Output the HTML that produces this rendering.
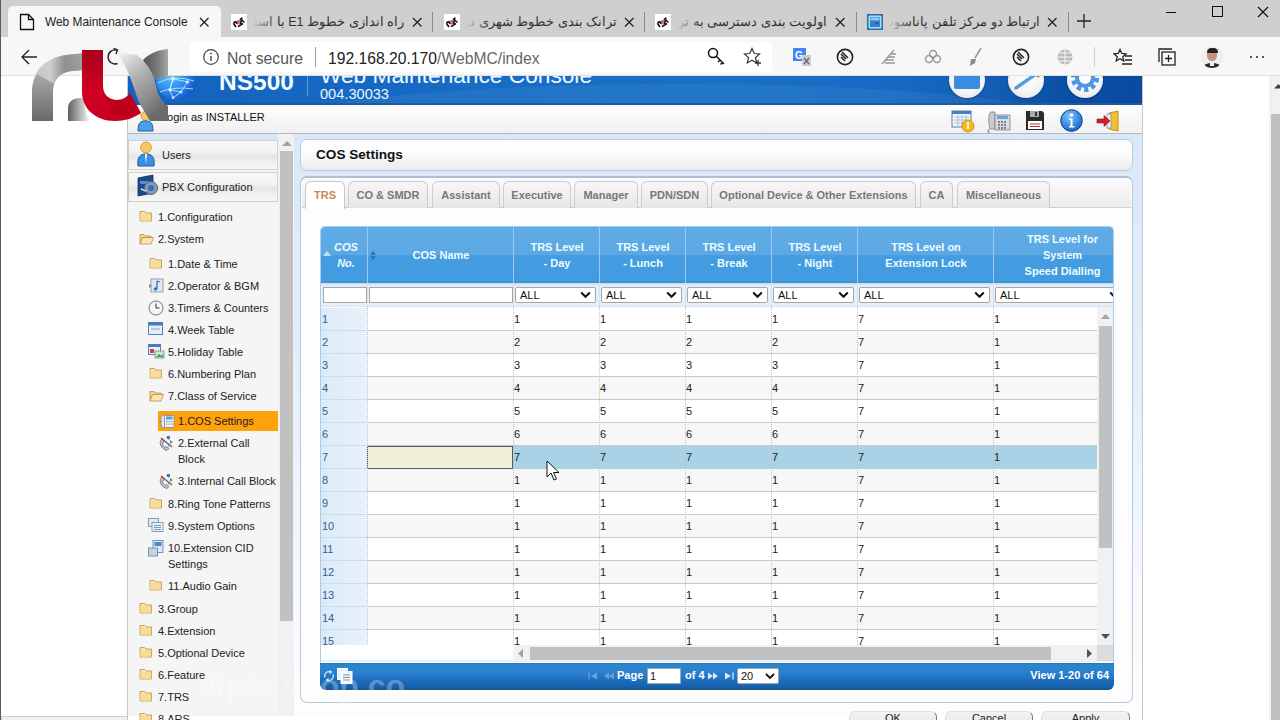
<!DOCTYPE html><html><head><meta charset="utf-8"><style>
*{margin:0;padding:0;box-sizing:border-box}
html,body{width:1280px;height:720px;overflow:hidden;background:#fff;font-family:"Liberation Sans",sans-serif}
.ab{position:absolute}
.t{position:absolute;white-space:nowrap;line-height:1}
#root{position:relative;width:1280px;height:720px;overflow:hidden;background:#fff}
</style></head><body><div id="root">

<div class="ab" style="left:0;top:0;width:1280px;height:38px;background:#cfcfcf"></div>
<div class="ab" style="left:8px;top:6px;width:213px;height:34px;background:#f7f7f7;border-radius:5px 5px 0 0"></div>
<div class="ab" style="left:0;top:37px;width:1280px;height:39px;background:#f7f7f7"></div>
<div class="ab" style="left:0;top:75px;width:1280px;height:1px;background:#e0e0e0"></div>
<div class="ab" style="left:0;top:0;width:1px;height:720px;background:#5a5a5a"></div>
<svg class="ab" style="left:19px;top:13px" width="16" height="18" viewBox="0 0 16 18"><path d="M1.5 1.5h8l5 5v10h-13z M9.5 1.5v5h5" fill="none" stroke="#111" stroke-width="1.3"/></svg>
<div class="t" style="left:45px;top:16.5px;font-size:11.9px;color:#222">Web Maintenance Console</div>
<svg class="ab" style="left:198px;top:16px" width="12" height="12" viewBox="0 0 12 12"><path d="M2 2L10.5 10.5M10.5 2L2 10.5" stroke="#222" stroke-width="1.3"/></svg>
<svg class="ab" style="left:231px;top:14px" width="16" height="16" viewBox="0 0 16 16"><rect width="16" height="16" fill="#fff"/><ellipse cx="7.5" cy="8" rx="2.6" ry="2" fill="#d87070" transform="rotate(-35 7.5 8)"/><path d="M2.5 9.5L5 13M2.5 9.5C3.5 7 6 7.5 5.5 10" fill="none" stroke="#111" stroke-width="1.6"/><path d="M9 4.5L13.5 8.5M11 3.5L9.5 10M7 12.5L12 9.5" fill="none" stroke="#111" stroke-width="1.5"/></svg>
<div class="t" style="left:250px;top:14px;width:154px;height:18px;overflow:hidden;font-size:12.5px;line-height:17px;color:#333;direction:rtl;text-align:right">راه اندازی خطوط E1 با استفاد</div>
<div class="ab" style="left:250px;top:12px;width:26px;height:22px;background:linear-gradient(90deg,#cfcfcf 10%,rgba(207,207,207,0))"></div>
<svg class="ab" style="left:411px;top:16px" width="12" height="12" viewBox="0 0 12 12"><path d="M2 2L10.5 10.5M10.5 2L2 10.5" stroke="#222" stroke-width="1.3"/></svg>
<div class="ab" style="left:432px;top:12px;width:1px;height:20px;background:#8a8a8a"></div>
<svg class="ab" style="left:444px;top:14px" width="16" height="16" viewBox="0 0 16 16"><rect width="16" height="16" fill="#fff"/><ellipse cx="7.5" cy="8" rx="2.6" ry="2" fill="#d87070" transform="rotate(-35 7.5 8)"/><path d="M2.5 9.5L5 13M2.5 9.5C3.5 7 6 7.5 5.5 10" fill="none" stroke="#111" stroke-width="1.6"/><path d="M9 4.5L13.5 8.5M11 3.5L9.5 10M7 12.5L12 9.5" fill="none" stroke="#111" stroke-width="1.5"/></svg>
<div class="t" style="left:463px;top:14px;width:154px;height:18px;overflow:hidden;font-size:12.5px;line-height:17px;color:#333;direction:rtl;text-align:right">ترانک بندی خطوط شهری در د</div>
<div class="ab" style="left:463px;top:12px;width:26px;height:22px;background:linear-gradient(90deg,#cfcfcf 10%,rgba(207,207,207,0))"></div>
<svg class="ab" style="left:623px;top:16px" width="12" height="12" viewBox="0 0 12 12"><path d="M2 2L10.5 10.5M10.5 2L2 10.5" stroke="#222" stroke-width="1.3"/></svg>
<div class="ab" style="left:644px;top:12px;width:1px;height:20px;background:#8a8a8a"></div>
<svg class="ab" style="left:655px;top:14px" width="16" height="16" viewBox="0 0 16 16"><rect width="16" height="16" fill="#fff"/><ellipse cx="7.5" cy="8" rx="2.6" ry="2" fill="#d87070" transform="rotate(-35 7.5 8)"/><path d="M2.5 9.5L5 13M2.5 9.5C3.5 7 6 7.5 5.5 10" fill="none" stroke="#111" stroke-width="1.6"/><path d="M9 4.5L13.5 8.5M11 3.5L9.5 10M7 12.5L12 9.5" fill="none" stroke="#111" stroke-width="1.5"/></svg>
<div class="t" style="left:674px;top:14px;width:153px;height:18px;overflow:hidden;font-size:12.5px;line-height:17px;color:#333;direction:rtl;text-align:right">اولویت بندی دسترسی به ترانک</div>
<div class="ab" style="left:674px;top:12px;width:26px;height:22px;background:linear-gradient(90deg,#cfcfcf 10%,rgba(207,207,207,0))"></div>
<svg class="ab" style="left:834px;top:16px" width="12" height="12" viewBox="0 0 12 12"><path d="M2 2L10.5 10.5M10.5 2L2 10.5" stroke="#222" stroke-width="1.3"/></svg>
<div class="ab" style="left:856px;top:12px;width:1px;height:20px;background:#8a8a8a"></div>
<svg class="ab" style="left:867px;top:14px" width="16" height="16" viewBox="0 0 16 16"><rect x="0" y="0" width="16" height="16" fill="#2f6ea8"/><rect x="1.5" y="1.5" width="13" height="13" rx="1.5" fill="#a8dcff"/><rect x="3" y="3" width="10" height="10" fill="#2a86d4"/><rect x="3.5" y="3.5" width="9" height="3" fill="#8ccaf6"/><circle cx="10" cy="9" r="1.2" fill="#803060"/></svg>
<div class="t" style="left:886px;top:14px;width:154px;height:18px;overflow:hidden;font-size:12.5px;line-height:17px;color:#333;direction:rtl;text-align:right">ارتباط دو مرکز تلفن پاناسونیک</div>
<div class="ab" style="left:886px;top:12px;width:26px;height:22px;background:linear-gradient(90deg,#cfcfcf 10%,rgba(207,207,207,0))"></div>
<svg class="ab" style="left:1046px;top:16px" width="12" height="12" viewBox="0 0 12 12"><path d="M2 2L10.5 10.5M10.5 2L2 10.5" stroke="#222" stroke-width="1.3"/></svg>
<div class="ab" style="left:1068px;top:12px;width:1px;height:20px;background:#8a8a8a"></div>
<svg class="ab" style="left:1076px;top:13px" width="16" height="16" viewBox="0 0 16 16"><path d="M8 1v14M1 8h14" stroke="#222" stroke-width="1.3"/></svg>
<div class="ab" style="left:1166px;top:12px;width:10px;height:1px;background:#111"></div>
<div class="ab" style="left:1212px;top:6px;width:11px;height:11px;border:1px solid #111"></div>
<svg class="ab" style="left:1257px;top:6px" width="12" height="12" viewBox="0 0 12 12"><path d="M1 1L11 11M11 1L1 11" stroke="#111" stroke-width="1.2"/></svg>
<svg class="ab" style="left:20px;top:48px" width="18" height="18" viewBox="0 0 18 18"><path d="M17 9H2M9 2L2 9l7 7" fill="none" stroke="#222" stroke-width="1.4"/></svg>
<svg class="ab" style="left:104px;top:46px" width="18" height="20" viewBox="0 0 18 20"><path d="M13 4.2A7 7 0 1 0 13.5 17.5" fill="none" stroke="#222" stroke-width="1.4"/><path d="M9.5 2.5L13.5 4 12 8" fill="none" stroke="#222" stroke-width="1.4"/></svg>
<div class="ab" style="left:190px;top:42px;width:582px;height:30px;background:#fff;border-radius:3px"></div>
<svg class="ab" style="left:202px;top:48px" width="18" height="18" viewBox="0 0 18 18"><circle cx="9" cy="9" r="7.3" fill="none" stroke="#444" stroke-width="1.2"/><path d="M9 8v5" stroke="#444" stroke-width="1.4"/><circle cx="9" cy="5.5" r="0.9" fill="#444"/></svg>
<div class="t" style="left:227px;top:50.5px;font-size:15.7px;color:#555">Not secure</div>
<div class="ab" style="left:315px;top:47px;width:1px;height:20px;background:#9a9a9a"></div>
<div class="t" style="left:328px;top:50.5px;font-size:15.7px;color:#222">192.168.20.170<span style="color:#666">/WebMC/index</span></div>
<svg class="ab" style="left:707px;top:47px" width="20" height="20" viewBox="0 0 20 20"><circle cx="6" cy="6" r="4.5" fill="none" stroke="#111" stroke-width="1.5"/><path d="M9 9l8 8M13 13l-2 2M15.5 15.5l-2 2" fill="none" stroke="#111" stroke-width="1.5"/></svg>
<svg class="ab" style="left:743px;top:47px" width="20" height="20" viewBox="0 0 20 20"><path d="M9 1.5l2.2 5 5.3.5-4 3.6 1.2 5.3L9 13.2 4.3 15.9l1.2-5.3-4-3.6 5.3-.5z" fill="none" stroke="#333" stroke-width="1.2"/><path d="M15 13v6M12 16h6" stroke="#333" stroke-width="1.3"/></svg>
<svg class="ab" style="left:792px;top:47px" width="20" height="20" viewBox="0 0 20 20"><rect x="1" y="1" width="13" height="13" fill="#4285f4"/><text x="3" y="12" font-size="10" fill="#fff" font-family="Liberation Sans" font-weight="bold">G</text><path d="M10 8h9v11h-9z" fill="#ccc"/><path d="M12 11l5 6M17 11l-5 6" stroke="#666" stroke-width="1.2"/></svg>
<svg class="ab" style="left:836px;top:48px" width="18" height="18" viewBox="0 0 18 18"><circle cx="9" cy="9" r="7.6" fill="none" stroke="#222" stroke-width="1.6"/><path d="M5 6l5 5M6 4l6 6M9 13l-4-4" fill="none" stroke="#222" stroke-width="1.5"/></svg>
<svg class="ab" style="left:880px;top:48px" width="18" height="18" viewBox="0 0 18 18"><path d="M2 16L14 2M5 15h10M6 12h8M8 9h7M10 6h6" fill="none" stroke="#999" stroke-width="1.5"/></svg>
<svg class="ab" style="left:924px;top:49px" width="18" height="16" viewBox="0 0 18 16"><circle cx="5" cy="10" r="3.5" fill="none" stroke="#999" stroke-width="1.4"/><circle cx="13" cy="10" r="3.5" fill="none" stroke="#999" stroke-width="1.4"/><circle cx="9" cy="5" r="3.5" fill="none" stroke="#999" stroke-width="1.4"/></svg>
<svg class="ab" style="left:968px;top:47px" width="16" height="20" viewBox="0 0 16 20"><path d="M13 1L7 11" stroke="#999" stroke-width="1.6"/><path d="M3 12l5 0 -1 4 -5 3z" fill="#888"/></svg>
<svg class="ab" style="left:1012px;top:48px" width="18" height="18" viewBox="0 0 18 18"><circle cx="9" cy="9" r="7.6" fill="none" stroke="#222" stroke-width="1.6"/><path d="M5 6l5 5M6 4l6 6M9 13l-4-4" fill="none" stroke="#222" stroke-width="1.5"/></svg>
<svg class="ab" style="left:1056px;top:48px" width="18" height="18" viewBox="0 0 18 18"><circle cx="9" cy="9" r="7.5" fill="#bbb"/><path d="M1.5 9h15M9 1.5v15M3 5h12M3 13h12" stroke="#f7f7f7" stroke-width="1"/></svg>
<div class="ab" style="left:1094px;top:47px;width:1px;height:20px;background:#d0d0d0"></div>
<svg class="ab" style="left:1113px;top:48px" width="20" height="18" viewBox="0 0 20 18"><path d="M7 1.5l1.8 4 4.2.4-3.2 2.9 1 4.2L7 10.8l-3.8 2.2 1-4.2L1 5.9l4.2-.4z" fill="none" stroke="#222" stroke-width="1.3"/><path d="M12 8h7M12 12h7M9 16h10" stroke="#222" stroke-width="1.3"/></svg>
<svg class="ab" style="left:1157px;top:47px" width="20" height="20" viewBox="0 0 20 20"><rect x="5" y="5" width="13" height="13" fill="none" stroke="#222" stroke-width="1.3"/><path d="M2 15V2h13" fill="none" stroke="#222" stroke-width="1.3"/><path d="M11.5 8v7M8 11.5h7" stroke="#222" stroke-width="1.3"/></svg>
<div class="ab" style="left:1201px;top:46px;width:22px;height:22px;border-radius:50%;overflow:hidden;background:#f0eeec"><div class="ab" style="left:6px;top:3px;width:10px;height:12px;background:#c49580;border-radius:45%"></div><div class="ab" style="left:5.5px;top:1.5px;width:11px;height:5px;background:#222;border-radius:5px 5px 1px 1px"></div><div class="ab" style="left:2px;top:17px;width:18px;height:8px;background:#2a2e3a;border-radius:50% 50% 0 0"></div><div class="ab" style="left:9px;top:16px;width:4px;height:4px;background:#eee"></div></div>
<div class="ab" style="left:1250px;top:56px;width:2px;height:2px;background:#222;border-radius:1px"></div>
<div class="ab" style="left:1256px;top:56px;width:2px;height:2px;background:#222;border-radius:1px"></div>
<div class="ab" style="left:1262px;top:56px;width:2px;height:2px;background:#222;border-radius:1px"></div>
<div class="ab" style="left:0;top:76px;width:1280px;height:644px;overflow:hidden"><div class="ab" style="left:0;top:-76px;width:1280px;height:720px">
<div class="ab" style="left:1269px;top:76px;width:11px;height:644px;background:#f1f1f1"></div>
<div class="ab" style="left:1271px;top:114px;width:9px;height:606px;background:#c1c1c1"></div>
<svg class="ab" style="left:1274px;top:83px" width="9" height="6" viewBox="0 0 9 6"><path d="M0 5.5L4.5 1 9 5.5z" fill="#404040"/></svg>
<div class="ab" style="left:1px;top:716px;width:427px;height:6px;background:#f0f0f0;border:1px solid #cfcfcf;border-radius:0 5px 0 0"></div>
<div class="ab" style="left:127px;top:76px;width:1016px;height:644px;border-left:1px solid #c8c8c8;border-right:1px solid #c8c8c8;background:#fff"></div>
<div class="ab" style="left:128px;top:76px;width:1014px;height:29px;overflow:hidden;background:linear-gradient(90deg,#1462be 0%,#176cc4 35%,#1870c6 60%,#176ac2 75%,#135eb6 85%,#0b4ea4 93%,#0a4aa0 100%)">
<div class="ab" style="left:150px;top:8px;width:800px;height:80px;border-radius:50%;background:rgba(255,255,255,0.05)"></div>
<div class="ab" style="left:0;top:27px;width:1014px;height:2px;background:#1d5c9c"></div>
</div>
<svg class="ab" style="left:156px;top:60px" width="40" height="41" viewBox="0 0 40 41">
<defs><radialGradient id="gl" cx="0.35" cy="0.4" r="0.75"><stop offset="0" stop-color="#58c4f8"/><stop offset="0.35" stop-color="#3a9cf0"/><stop offset="0.7" stop-color="#1f6fe0"/><stop offset="1" stop-color="#0c50c0"/></radialGradient>
<radialGradient id="nd"><stop offset="0" stop-color="#fff"/><stop offset="1" stop-color="#fff" stop-opacity="0"/></radialGradient></defs>
<circle cx="20" cy="20" r="20" fill="url(#gl)"/>
<path d="M2 23Q18 14 38 21M4 32Q20 26 37 29M17 18.75L31.5 22 25 32 17 37.8 13.8 29.9zM17 18.75L13.8 29.9 25 32" fill="none" stroke="#d8f4ff" stroke-width="0.9" opacity="0.85"/>
<circle cx="17" cy="18.75" r="3" fill="url(#nd)"/><circle cx="31.5" cy="22" r="2.6" fill="url(#nd)"/><circle cx="13.8" cy="29.9" r="2.2" fill="url(#nd)"/><circle cx="25" cy="32" r="2.2" fill="url(#nd)"/><circle cx="17" cy="37.8" r="2" fill="url(#nd)"/>
</svg>
<div class="t" style="left:219px;top:69.5px;font-size:24.5px;font-weight:bold;color:#f2fbff">NS500</div>
<div class="ab" style="left:307px;top:76px;width:1px;height:20px;background:rgba(255,255,255,0.35)"></div>
<div class="t" style="left:320px;top:64px;font-size:22.7px;color:#f0f8ff">Web Maintenance Console</div>
<div class="t" style="left:320px;top:87px;font-size:14.6px;color:#eaf6ff">004.30033</div>
<div class="ab" style="left:949px;top:62px;width:36px;height:36px;border-radius:50%;background:radial-gradient(circle at 50% 40%,#ffffff 0%,#f4f4f4 60%,#d8d8d8 100%);box-shadow:0 1px 2px rgba(0,0,0,.3)"></div>
<div class="ab" style="left:1008px;top:62px;width:36px;height:36px;border-radius:50%;background:radial-gradient(circle at 50% 40%,#ffffff 0%,#f4f4f4 60%,#d8d8d8 100%);box-shadow:0 1px 2px rgba(0,0,0,.3)"></div>
<div class="ab" style="left:1067px;top:62px;width:36px;height:36px;border-radius:50%;background:radial-gradient(circle at 50% 40%,#ffffff 0%,#f4f4f4 60%,#d8d8d8 100%);box-shadow:0 1px 2px rgba(0,0,0,.3)"></div>
<div class="ab" style="left:954px;top:73px;width:26px;height:16px;background:#3b8be0;border-radius:2px"></div>
<svg class="ab" style="left:1008px;top:66px" width="36" height="28" viewBox="0 0 36 28"><path d="M8 22L28 8" stroke="#58a0e0" stroke-width="3.5" stroke-linecap="round"/><path d="M24 4l9 5-2.5 3-8-5z" fill="#9a9a9a"/></svg>
<svg class="ab" style="left:1068px;top:66px" width="34" height="30" viewBox="0 0 34 30"><circle cx="17" cy="12" r="11" fill="none" stroke="#4d96e6" stroke-width="6" stroke-dasharray="4 3"/><circle cx="17" cy="12" r="8" fill="none" stroke="#4d96e6" stroke-width="4"/></svg>
<div class="ab" style="left:128px;top:105px;width:1014px;height:29px;background:linear-gradient(#fdfdfd,#f0f0f0);border-bottom:1px solid #b8b8b8"></div>
<div class="t" style="left:161px;top:112px;font-size:11px;color:#111">Login as INSTALLER</div>
<svg class="ab" style="left:137px;top:111px" width="17" height="21" viewBox="0 0 17 21"><circle cx="8.5" cy="5" r="4.5" fill="#f5c870" stroke="#c89030" stroke-width=".8"/><path d="M1 20c0-8 2-10 7.5-10S16 12 16 20z" fill="#4aa0e8" stroke="#1d5fa8" stroke-width="1"/></svg>
<svg class="ab" style="left:951px;top:110px" width="24" height="23" viewBox="0 0 24 23"><rect x="1" y="1" width="19" height="16" fill="#eef4fc" stroke="#5a7fb8"/><rect x="1" y="1" width="19" height="3" fill="#4a7cc0"/><path d="M3 7h15M3 10h15M3 13h15M7 5v11M11 5v11M15 5v11" stroke="#9bb0d0" stroke-width=".7"/><circle cx="17" cy="16" r="6" fill="#f5b820" stroke="#d89000"/><path d="M17 12v7" stroke="#fff" stroke-width="1.6"/></svg>
<svg class="ab" style="left:986px;top:109px" width="26" height="24" viewBox="0 0 26 24"><path d="M5 3c-3 0-3 16 0 17h4V3z" fill="#c8ccd2" stroke="#7a8088" stroke-width=".8"/><rect x="9" y="6" width="15" height="15" fill="#d8dce2" stroke="#7a8088" stroke-width=".8"/><rect x="11" y="7" width="11" height="3" fill="#6aa8d8"/><g fill="#555"><circle cx="13" cy="13" r=".9"/><circle cx="16" cy="13" r=".9"/><circle cx="19" cy="13" r=".9"/><circle cx="13" cy="16" r=".9"/><circle cx="16" cy="16" r=".9"/><circle cx="19" cy="16" r=".9"/><circle cx="13" cy="19" r=".9"/><circle cx="16" cy="19" r=".9"/><circle cx="19" cy="19" r=".9"/></g><path d="M4 20c-3 1-3 4 0 3" fill="none" stroke="#555" stroke-width=".8"/></svg>
<svg class="ab" style="left:1025px;top:110px" width="20" height="21" viewBox="0 0 20 21"><path d="M1 1h16l2 2v17H1z" fill="#2a2a2a"/><rect x="5" y="1" width="9" height="6" fill="#aaa"/><rect x="10" y="2" width="2" height="4" fill="#333"/><rect x="3" y="11" width="14" height="8" fill="#fff"/><path d="M5 14h10M5 16.5h10" stroke="#c03030" stroke-width="1"/></svg>
<svg class="ab" style="left:1060px;top:109px" width="23" height="23" viewBox="0 0 23 23"><defs><radialGradient id="ig" cx=".4" cy=".3" r=".8"><stop offset="0" stop-color="#7cc4ff"/><stop offset="1" stop-color="#0b5cc0"/></radialGradient></defs><circle cx="11.5" cy="11.5" r="10.8" fill="url(#ig)" stroke="#0a3f90" stroke-width="1"/><circle cx="11.5" cy="6" r="1.8" fill="#fff"/><path d="M9 9.5h3.5V17h2v1.5H9V17h1.5V11H9z" fill="#fff"/></svg>
<svg class="ab" style="left:1096px;top:110px" width="24" height="22" viewBox="0 0 24 22"><path d="M13 3l9-2v20l-9-2z" fill="#f0c030" stroke="#b08000" stroke-width=".8"/><rect x="11" y="4" width="4" height="14" fill="#e8eef8" stroke="#8090a8" stroke-width=".8"/><path d="M1 9h7V5.5L14 11l-6 5.5V13H1z" fill="#d42020" stroke="#901010" stroke-width=".6"/></svg>
<div class="ab" style="left:128px;top:134px;width:150px;height:582px;background:#f5f5f5"></div>
<div class="ab" style="left:128px;top:134px;width:150px;height:6px;background:#d8e7f7"></div>
<div class="ab" style="left:278px;top:134px;width:16px;height:582px;background:#f1f1f1"></div>
<div class="ab" style="left:280px;top:151px;width:13px;height:470px;background:#c1c1c1"></div>
<svg class="ab" style="left:282px;top:140px" width="10" height="6" viewBox="0 0 10 6"><path d="M0 6L5 1 10 6z" fill="#a3a3a3"/></svg>
<div class="ab" style="left:128px;top:140px;width:150px;height:30px;border:1px solid #d0d0d0;background:linear-gradient(#f8f8f8 0%,#f2f2f2 40%,#e4e4e4 55%,#f0f0f0 75%,#f6f6f6 100%)"></div>
<div class="t" style="left:162px;top:150px;font-size:11px;color:#222">Users</div>
<div class="ab" style="left:128px;top:172px;width:150px;height:30px;border:1px solid #d0d0d0;background:linear-gradient(#f8f8f8 0%,#f2f2f2 40%,#e4e4e4 55%,#f0f0f0 75%,#f6f6f6 100%)"></div>
<div class="t" style="left:162px;top:182px;font-size:11px;color:#222">PBX Configuration</div>
<svg class="ab" style="left:136px;top:141px" width="20" height="26" viewBox="0 0 20 26"><circle cx="10" cy="6.5" r="5.5" fill="#f7c765" stroke="#c99535" stroke-width=".8"/><path d="M2 25c-1-9 2-12 8-12s9 3 8 12z" fill="#3d8fe0" stroke="#1b5aa5" stroke-width="1"/><path d="M9 13l1 10 1-10z" fill="#fff"/></svg>
<svg class="ab" style="left:137px;top:174px" width="22" height="24" viewBox="0 0 22 24"><path d="M1 4l15-3v18L1 22z" fill="#1e4a8a" stroke="#0e2e60" stroke-width=".8"/><rect x="3" y="7" width="10" height="3" fill="#5a8ad0"/><circle cx="14" cy="14" r="6.5" fill="#8a9ab0" stroke="#556070" stroke-width="1"/><circle cx="14" cy="14" r="3" fill="#3070c0"/><path d="M4 15l5 2" stroke="#dde" stroke-width="1.5"/></svg>
<div class="ab" style="left:158px;top:411px;width:120px;height:20px;background:#ffa10a"></div>
<svg class="ab" style="left:139px;top:210px" width="14" height="12" viewBox="0 0 14 12"><path d="M1 1.5h4.5l1.5 1.5H12.5V11H1z" fill="#fbe5a8" stroke="#b8904a" stroke-width=".8"/><path d="M1.4 4h10.7v6.6H1.4z" fill="#f8dc92"/></svg>
<div class="t" style="left:158px;top:211px;font-size:11px;line-height:16px;margin-top:-2px;color:#222">1.Configuration</div>
<svg class="ab" style="left:139px;top:233px" width="15" height="12" viewBox="0 0 15 12"><path d="M1 1.5h4l1.5 1.5H12v2H3.5L1 11z" fill="#f3d68c" stroke="#b8904a" stroke-width=".8"/><path d="M1 11l2.5-6.5H14.5L12 11z" fill="#fae6ac" stroke="#b8904a" stroke-width=".8"/></svg>
<div class="t" style="left:158px;top:233px;font-size:11px;line-height:16px;margin-top:-2px;color:#222">2.System</div>
<svg class="ab" style="left:149px;top:257px" width="14" height="12" viewBox="0 0 14 12"><path d="M1 1.5h4.5l1.5 1.5H12.5V11H1z" fill="#fbe5a8" stroke="#b8904a" stroke-width=".8"/><path d="M1.4 4h10.7v6.6H1.4z" fill="#f8dc92"/></svg>
<div class="t" style="left:168px;top:258px;font-size:11px;line-height:16px;margin-top:-2px;color:#222">1.Date &amp; Time</div>
<svg class="ab" style="left:148px;top:278px" width="16" height="16" viewBox="0 0 16 16"><rect x="3" y="1" width="12" height="13" fill="#dfe8f2" stroke="#7890a8" stroke-width=".8"/><path d="M9 3v8M9 3l3 1" stroke="#3a70b8" stroke-width="1.3" fill="none"/><circle cx="7.5" cy="11" r="1.8" fill="#3a70b8"/><path d="M1 6l3 2-3 2z" fill="#889"/></svg>
<div class="t" style="left:168px;top:280px;font-size:11px;line-height:16px;margin-top:-2px;color:#222">2.Operator &amp; BGM</div>
<svg class="ab" style="left:148px;top:300px" width="16" height="16" viewBox="0 0 16 16"><circle cx="8" cy="8" r="7" fill="#f4f4f4" stroke="#777" stroke-width="1"/><path d="M8 3.5V8h3.5" stroke="#333" stroke-width="1" fill="none"/></svg>
<div class="t" style="left:168px;top:302px;font-size:11px;line-height:16px;margin-top:-2px;color:#222">3.Timers &amp; Counters</div>
<svg class="ab" style="left:148px;top:322px" width="15" height="13" viewBox="0 0 15 13"><rect x=".5" y=".5" width="14" height="12" fill="#e6eefa" stroke="#5a80b8"/><rect x=".5" y=".5" width="14" height="3" fill="#4a78c0"/><path d="M3 7h9" stroke="#8aa" stroke-width="1"/></svg>
<div class="t" style="left:168px;top:324px;font-size:11px;line-height:16px;margin-top:-2px;color:#222">4.Week Table</div>
<svg class="ab" style="left:148px;top:344px" width="17" height="15" viewBox="0 0 17 15"><rect x=".5" y=".5" width="12" height="10" fill="#e8eef8" stroke="#5a80b8"/><rect x=".5" y=".5" width="12" height="2.5" fill="#4a78c0"/><rect x="2" y="5" width="4" height="4" fill="#d04040"/><rect x="7" y="7" width="9" height="7" fill="#cfe4cf" stroke="#6a8a9a" stroke-width=".8"/><path d="M8 13l3-3 2 2 2-2v3z" fill="#4a9a4a"/></svg>
<div class="t" style="left:168px;top:346px;font-size:11px;line-height:16px;margin-top:-2px;color:#222">5.Holiday Table</div>
<svg class="ab" style="left:149px;top:367px" width="14" height="12" viewBox="0 0 14 12"><path d="M1 1.5h4.5l1.5 1.5H12.5V11H1z" fill="#fbe5a8" stroke="#b8904a" stroke-width=".8"/><path d="M1.4 4h10.7v6.6H1.4z" fill="#f8dc92"/></svg>
<div class="t" style="left:168px;top:368px;font-size:11px;line-height:16px;margin-top:-2px;color:#222">6.Numbering Plan</div>
<svg class="ab" style="left:149px;top:390px" width="15" height="12" viewBox="0 0 15 12"><path d="M1 1.5h4l1.5 1.5H12v2H3.5L1 11z" fill="#f3d68c" stroke="#b8904a" stroke-width=".8"/><path d="M1 11l2.5-6.5H14.5L12 11z" fill="#fae6ac" stroke="#b8904a" stroke-width=".8"/></svg>
<div class="t" style="left:168px;top:390px;font-size:11px;line-height:16px;margin-top:-2px;color:#222">7.Class of Service</div>
<svg class="ab" style="left:158px;top:413px" width="17" height="17" viewBox="0 0 17 17"><path d="M5 2C2 3 2 13 5 15h2V2z" fill="#dfe6ee" stroke="#7a8a98" stroke-width=".8"/><rect x="6.5" y="2.5" width="9.5" height="12" rx="1" fill="#eef3f8" stroke="#7a8a98" stroke-width=".8"/><rect x="8" y="3.5" width="6.5" height="3" fill="#5a9ad8"/><g fill="#8a98a8"><rect x="8" y="8" width="1.5" height="1.2"/><rect x="10.5" y="8" width="1.5" height="1.2"/><rect x="13" y="8" width="1.5" height="1.2"/><rect x="8" y="10.5" width="1.5" height="1.2"/><rect x="10.5" y="10.5" width="1.5" height="1.2"/><rect x="13" y="10.5" width="1.5" height="1.2"/></g><path d="M1 8.5h3" stroke="#889" stroke-width="1"/></svg>
<div class="t" style="left:178px;top:415px;font-size:11px;line-height:16px;margin-top:-2px;color:#222">1.COS Settings</div>
<svg class="ab" style="left:158px;top:435px" width="17" height="17" viewBox="0 0 17 17"><path d="M4 4C0 7 3 14 9 15.5L11 13.5 8.5 11.5 7 12.5C5 11 4.5 9.5 4.5 8L6 7 5 4z" fill="#b8c4cc" stroke="#6a7a88" stroke-width=".9"/><path d="M3 3L14 12" stroke="#b04030" stroke-width="1.3"/><path d="M8 2l3 0 0 3z" fill="#2f78c8"/><rect x="9" y="1" width="3" height="3" fill="#3a7ad0"/><path d="M12 5l3 2-3 2z" fill="#5aa040"/><path d="M9 8l3 1-1 3z" fill="#3a88d8"/></svg>
<div class="t" style="left:178px;top:437px;font-size:11px;line-height:16px;margin-top:-2px;color:#222">2.External Call<br>Block</div>
<svg class="ab" style="left:158px;top:473px" width="17" height="17" viewBox="0 0 17 17"><path d="M4 4C0 7 3 14 9 15.5L11 13.5 8.5 11.5 7 12.5C5 11 4.5 9.5 4.5 8L6 7 5 4z" fill="#b8c4cc" stroke="#6a7a88" stroke-width=".9"/><path d="M3 3L14 12" stroke="#b04030" stroke-width="1.3"/><path d="M8 2l3 0 0 3z" fill="#2f78c8"/><rect x="9" y="1" width="3" height="3" fill="#3a7ad0"/><path d="M12 5l3 2-3 2z" fill="#5aa040"/><path d="M9 8l3 1-1 3z" fill="#3a88d8"/></svg>
<div class="t" style="left:178px;top:475px;font-size:11px;line-height:16px;margin-top:-2px;color:#222">3.Internal Call Block</div>
<svg class="ab" style="left:149px;top:497px" width="14" height="12" viewBox="0 0 14 12"><path d="M1 1.5h4.5l1.5 1.5H12.5V11H1z" fill="#fbe5a8" stroke="#b8904a" stroke-width=".8"/><path d="M1.4 4h10.7v6.6H1.4z" fill="#f8dc92"/></svg>
<div class="t" style="left:168px;top:498px;font-size:11px;line-height:16px;margin-top:-2px;color:#222">8.Ring Tone Patterns</div>
<svg class="ab" style="left:148px;top:518px" width="16" height="14" viewBox="0 0 16 14"><rect x=".5" y=".5" width="10" height="8" fill="#dfe9f5" stroke="#6a88a8" stroke-width=".8"/><rect x="4" y="4.5" width="11" height="9" fill="#eef3f9" stroke="#6a88a8" stroke-width=".8"/><path d="M6 7.5h7M6 9.5h7M6 11.5h7" stroke="#5080b0" stroke-width=".8"/></svg>
<div class="t" style="left:168px;top:520px;font-size:11px;line-height:16px;margin-top:-2px;color:#222">9.System Options</div>
<svg class="ab" style="left:148px;top:540px" width="16" height="17" viewBox="0 0 16 17"><rect x="5" y=".5" width="10" height="12" fill="#dde8f5" stroke="#5a7ea8" stroke-width=".8"/><rect x="6.5" y="2" width="7" height="4" fill="#4a88d0"/><rect x=".5" y="8" width="9" height="8" fill="#c8d4e2" stroke="#5a7ea8" stroke-width=".8"/></svg>
<div class="t" style="left:168px;top:542px;font-size:11px;line-height:16px;margin-top:-2px;color:#222">10.Extension CID<br>Settings</div>
<svg class="ab" style="left:149px;top:579px" width="14" height="12" viewBox="0 0 14 12"><path d="M1 1.5h4.5l1.5 1.5H12.5V11H1z" fill="#fbe5a8" stroke="#b8904a" stroke-width=".8"/><path d="M1.4 4h10.7v6.6H1.4z" fill="#f8dc92"/></svg>
<div class="t" style="left:168px;top:580px;font-size:11px;line-height:16px;margin-top:-2px;color:#222">11.Audio Gain</div>
<svg class="ab" style="left:139px;top:602px" width="14" height="12" viewBox="0 0 14 12"><path d="M1 1.5h4.5l1.5 1.5H12.5V11H1z" fill="#fbe5a8" stroke="#b8904a" stroke-width=".8"/><path d="M1.4 4h10.7v6.6H1.4z" fill="#f8dc92"/></svg>
<div class="t" style="left:158px;top:603px;font-size:11px;line-height:16px;margin-top:-2px;color:#222">3.Group</div>
<svg class="ab" style="left:139px;top:624px" width="14" height="12" viewBox="0 0 14 12"><path d="M1 1.5h4.5l1.5 1.5H12.5V11H1z" fill="#fbe5a8" stroke="#b8904a" stroke-width=".8"/><path d="M1.4 4h10.7v6.6H1.4z" fill="#f8dc92"/></svg>
<div class="t" style="left:158px;top:625px;font-size:11px;line-height:16px;margin-top:-2px;color:#222">4.Extension</div>
<svg class="ab" style="left:139px;top:646px" width="14" height="12" viewBox="0 0 14 12"><path d="M1 1.5h4.5l1.5 1.5H12.5V11H1z" fill="#fbe5a8" stroke="#b8904a" stroke-width=".8"/><path d="M1.4 4h10.7v6.6H1.4z" fill="#f8dc92"/></svg>
<div class="t" style="left:158px;top:647px;font-size:11px;line-height:16px;margin-top:-2px;color:#222">5.Optional Device</div>
<svg class="ab" style="left:139px;top:668px" width="14" height="12" viewBox="0 0 14 12"><path d="M1 1.5h4.5l1.5 1.5H12.5V11H1z" fill="#fbe5a8" stroke="#b8904a" stroke-width=".8"/><path d="M1.4 4h10.7v6.6H1.4z" fill="#f8dc92"/></svg>
<div class="t" style="left:158px;top:669px;font-size:11px;line-height:16px;margin-top:-2px;color:#222">6.Feature</div>
<svg class="ab" style="left:139px;top:690px" width="14" height="12" viewBox="0 0 14 12"><path d="M1 1.5h4.5l1.5 1.5H12.5V11H1z" fill="#fbe5a8" stroke="#b8904a" stroke-width=".8"/><path d="M1.4 4h10.7v6.6H1.4z" fill="#f8dc92"/></svg>
<div class="t" style="left:158px;top:691px;font-size:11px;line-height:16px;margin-top:-2px;color:#222">7.TRS</div>
<svg class="ab" style="left:139px;top:712px" width="14" height="12" viewBox="0 0 14 12"><path d="M1 1.5h4.5l1.5 1.5H12.5V11H1z" fill="#fbe5a8" stroke="#b8904a" stroke-width=".8"/><path d="M1.4 4h10.7v6.6H1.4z" fill="#f8dc92"/></svg>
<div class="t" style="left:158px;top:713px;font-size:11px;line-height:16px;margin-top:-2px;color:#222">8.ARS</div>
<div class="ab" style="left:294px;top:134px;width:848px;height:582px;background:linear-gradient(#d8e8fa 0px,#e4effb 250px,#f6f9fe 450px,#fdfdfe 582px)"></div>
<div class="ab" style="left:300px;top:139px;width:833px;height:32px;border:1px solid #bccbdb;border-radius:7px;background:linear-gradient(#ffffff 0%,#fbfbfb 50%,#ebebeb 100%)"></div>
<div class="t" style="left:316px;top:148px;font-size:13.6px;font-weight:bold;color:#111">COS Settings</div>
<div class="ab" style="left:300px;top:176px;width:833px;height:527px;border:1px solid #b8c8d8;border-top:2px solid #b0c0d0;border-radius:7px;background:#fdfdfd"></div>
<div class="ab" style="left:302px;top:178px;width:829px;height:30px;border-radius:6px 6px 0 0;background:linear-gradient(#fbfbfb,#ececec)"></div>
<div class="ab" style="left:302px;top:207px;width:829px;height:1px;background:#d0d0d0"></div>
<div class="ab" style="left:305px;top:181px;width:40px;height:28px;border:1px solid #c8c8c8;border-bottom:none;border-radius:6px 6px 0 0;background:#fff"></div>
<div class="t" style="left:305px;top:190px;width:40px;text-align:center;font-size:11px;font-weight:bold;color:#c98a55">TRS</div>
<div class="ab" style="left:348px;top:181px;width:80px;height:27px;border:1px solid #cdcdcd;border-bottom:none;border-radius:6px 6px 0 0;background:linear-gradient(#f7f7f7,#e6e6e6)"></div>
<div class="t" style="left:348px;top:190px;width:80px;text-align:center;font-size:11px;font-weight:bold;color:#787878">CO &amp; SMDR</div>
<div class="ab" style="left:432px;top:181px;width:68px;height:27px;border:1px solid #cdcdcd;border-bottom:none;border-radius:6px 6px 0 0;background:linear-gradient(#f7f7f7,#e6e6e6)"></div>
<div class="t" style="left:432px;top:190px;width:68px;text-align:center;font-size:11px;font-weight:bold;color:#787878">Assistant</div>
<div class="ab" style="left:503px;top:181px;width:68px;height:27px;border:1px solid #cdcdcd;border-bottom:none;border-radius:6px 6px 0 0;background:linear-gradient(#f7f7f7,#e6e6e6)"></div>
<div class="t" style="left:503px;top:190px;width:68px;text-align:center;font-size:11px;font-weight:bold;color:#787878">Executive</div>
<div class="ab" style="left:574px;top:181px;width:64px;height:27px;border:1px solid #cdcdcd;border-bottom:none;border-radius:6px 6px 0 0;background:linear-gradient(#f7f7f7,#e6e6e6)"></div>
<div class="t" style="left:574px;top:190px;width:64px;text-align:center;font-size:11px;font-weight:bold;color:#787878">Manager</div>
<div class="ab" style="left:641px;top:181px;width:67px;height:27px;border:1px solid #cdcdcd;border-bottom:none;border-radius:6px 6px 0 0;background:linear-gradient(#f7f7f7,#e6e6e6)"></div>
<div class="t" style="left:641px;top:190px;width:67px;text-align:center;font-size:11px;font-weight:bold;color:#787878">PDN/SDN</div>
<div class="ab" style="left:711px;top:181px;width:205px;height:27px;border:1px solid #cdcdcd;border-bottom:none;border-radius:6px 6px 0 0;background:linear-gradient(#f7f7f7,#e6e6e6)"></div>
<div class="t" style="left:711px;top:190px;width:205px;text-align:center;font-size:11px;font-weight:bold;color:#787878">Optional Device &amp; Other Extensions</div>
<div class="ab" style="left:920px;top:181px;width:33px;height:27px;border:1px solid #cdcdcd;border-bottom:none;border-radius:6px 6px 0 0;background:linear-gradient(#f7f7f7,#e6e6e6)"></div>
<div class="t" style="left:920px;top:190px;width:33px;text-align:center;font-size:11px;font-weight:bold;color:#787878">CA</div>
<div class="ab" style="left:957px;top:181px;width:93px;height:27px;border:1px solid #cdcdcd;border-bottom:none;border-radius:6px 6px 0 0;background:linear-gradient(#f7f7f7,#e6e6e6)"></div>
<div class="t" style="left:957px;top:190px;width:93px;text-align:center;font-size:11px;font-weight:bold;color:#787878">Miscellaneous</div>
<div class="ab" style="left:320px;top:226px;width:794px;height:437px;background:#fff;border:1px solid #a9cdee;border-bottom:none;border-radius:5px 5px 0 0;overflow:hidden"></div>
<div class="ab" style="left:321px;top:227px;width:792px;height:56px;border-radius:4px 4px 0 0;background:linear-gradient(#60ace6 0%,#5ba8e4 50%,#449de0 51%,#419bdf 96%,#3a90d4 100%)"></div>
<div class="ab" style="left:367px;top:227px;width:1px;height:56px;background:#9ccaf0"></div>
<div class="ab" style="left:513px;top:227px;width:1px;height:56px;background:#9ccaf0"></div>
<div class="ab" style="left:599px;top:227px;width:1px;height:56px;background:#9ccaf0"></div>
<div class="ab" style="left:685px;top:227px;width:1px;height:56px;background:#9ccaf0"></div>
<div class="ab" style="left:771px;top:227px;width:1px;height:56px;background:#9ccaf0"></div>
<div class="ab" style="left:857px;top:227px;width:1px;height:56px;background:#9ccaf0"></div>
<div class="ab" style="left:993px;top:227px;width:1px;height:56px;background:#9ccaf0"></div>
<div class="t" style="left:323px;top:239.0px;width:46px;text-align:center;font-size:11px;font-weight:bold;line-height:16px;color:#eefcff"><i>COS<br>No.</i></div>
<div class="t" style="left:368px;top:247.0px;width:146px;text-align:center;font-size:11px;font-weight:bold;line-height:16px;color:#eefcff">COS Name</div>
<div class="t" style="left:514px;top:239.0px;width:86px;text-align:center;font-size:11px;font-weight:bold;line-height:16px;color:#eefcff">TRS Level<br>- Day</div>
<div class="t" style="left:600px;top:239.0px;width:86px;text-align:center;font-size:11px;font-weight:bold;line-height:16px;color:#eefcff">TRS Level<br>- Lunch</div>
<div class="t" style="left:686px;top:239.0px;width:86px;text-align:center;font-size:11px;font-weight:bold;line-height:16px;color:#eefcff">TRS Level<br>- Break</div>
<div class="t" style="left:772px;top:239.0px;width:86px;text-align:center;font-size:11px;font-weight:bold;line-height:16px;color:#eefcff">TRS Level<br>- Night</div>
<div class="t" style="left:858px;top:239.0px;width:136px;text-align:center;font-size:11px;font-weight:bold;line-height:16px;color:#eefcff">TRS Level on<br>Extension Lock</div>
<div class="t" style="left:994px;top:231.0px;width:137px;text-align:center;font-size:11px;font-weight:bold;line-height:16px;color:#eefcff">TRS Level for<br>System<br>Speed Dialling</div>
<svg class="ab" style="left:323px;top:251px" width="8" height="5" viewBox="0 0 8 5"><path d="M0 5L4 0 8 5z" fill="#bfe0f8"/></svg>
<svg class="ab" style="left:369.5px;top:251px" width="6" height="9" viewBox="0 0 6 9"><path d="M0 3.8L3 0 6 3.8zM0 5.2L3 9 6 5.2z" fill="#2a6fb8"/></svg>
<div class="ab" style="left:321px;top:283px;width:792px;height:24px;background:linear-gradient(#bcdcf6 0px,#dceaf8 2px,#e7eff8 4px)"></div>
<div class="ab" style="left:321px;top:306px;width:792px;height:1px;background:#d6e2ee"></div>
<div class="ab" style="left:0;top:0;width:1113px;height:720px;overflow:hidden">
<div class="ab" style="left:323px;top:287px;width:44px;height:16px;background:#fff;border:1px solid #a6a6a6"></div>
<div class="ab" style="left:369px;top:287px;width:144px;height:16px;background:#fff;border:1px solid #a6a6a6"></div>
<div class="ab" style="left:515px;top:287px;width:81px;height:16px;background:#fff;border:1px solid #a6a6a6;border-radius:2px"></div>
<div class="t" style="left:520px;top:290px;font-size:11px;color:#111">ALL</div>
<svg class="ab" style="left:580px;top:291px" width="11" height="8" viewBox="0 0 11 8"><path d="M1.2 1.5l4.3 4.3 4.3-4.3" fill="none" stroke="#111" stroke-width="2"/></svg>
<div class="ab" style="left:601px;top:287px;width:81px;height:16px;background:#fff;border:1px solid #a6a6a6;border-radius:2px"></div>
<div class="t" style="left:606px;top:290px;font-size:11px;color:#111">ALL</div>
<svg class="ab" style="left:666px;top:291px" width="11" height="8" viewBox="0 0 11 8"><path d="M1.2 1.5l4.3 4.3 4.3-4.3" fill="none" stroke="#111" stroke-width="2"/></svg>
<div class="ab" style="left:687px;top:287px;width:81px;height:16px;background:#fff;border:1px solid #a6a6a6;border-radius:2px"></div>
<div class="t" style="left:692px;top:290px;font-size:11px;color:#111">ALL</div>
<svg class="ab" style="left:752px;top:291px" width="11" height="8" viewBox="0 0 11 8"><path d="M1.2 1.5l4.3 4.3 4.3-4.3" fill="none" stroke="#111" stroke-width="2"/></svg>
<div class="ab" style="left:773px;top:287px;width:81px;height:16px;background:#fff;border:1px solid #a6a6a6;border-radius:2px"></div>
<div class="t" style="left:778px;top:290px;font-size:11px;color:#111">ALL</div>
<svg class="ab" style="left:838px;top:291px" width="11" height="8" viewBox="0 0 11 8"><path d="M1.2 1.5l4.3 4.3 4.3-4.3" fill="none" stroke="#111" stroke-width="2"/></svg>
<div class="ab" style="left:859px;top:287px;width:131px;height:16px;background:#fff;border:1px solid #a6a6a6;border-radius:2px"></div>
<div class="t" style="left:864px;top:290px;font-size:11px;color:#111">ALL</div>
<svg class="ab" style="left:974px;top:291px" width="11" height="8" viewBox="0 0 11 8"><path d="M1.2 1.5l4.3 4.3 4.3-4.3" fill="none" stroke="#111" stroke-width="2"/></svg>
<div class="ab" style="left:995px;top:287px;width:130px;height:16px;background:#fff;border:1px solid #a6a6a6;border-radius:2px"></div>
<div class="t" style="left:1000px;top:290px;font-size:11px;color:#111">ALL</div>
<svg class="ab" style="left:1109px;top:291px" width="11" height="8" viewBox="0 0 11 8"><path d="M1.2 1.5l4.3 4.3 4.3-4.3" fill="none" stroke="#111" stroke-width="2"/></svg>
</div>
<div class="ab" style="left:367px;top:283px;width:1px;height:24px;background:#d6e2ee"></div>
<div class="ab" style="left:513px;top:283px;width:1px;height:24px;background:#d6e2ee"></div>
<div class="ab" style="left:599px;top:283px;width:1px;height:24px;background:#d6e2ee"></div>
<div class="ab" style="left:685px;top:283px;width:1px;height:24px;background:#d6e2ee"></div>
<div class="ab" style="left:771px;top:283px;width:1px;height:24px;background:#d6e2ee"></div>
<div class="ab" style="left:857px;top:283px;width:1px;height:24px;background:#d6e2ee"></div>
<div class="ab" style="left:993px;top:283px;width:1px;height:24px;background:#d6e2ee"></div>
<div class="ab" style="left:321px;top:307px;width:792px;height:338px;overflow:hidden">
<div class="ab" style="left:46px;top:0.5px;width:730px;height:23px;background:#ffffff;border-bottom:1px solid #c9c9c9"></div>
<div class="ab" style="left:0;top:0.5px;width:46px;height:23px;background:linear-gradient(90deg,#dceaf8,#e9f2fb);border-bottom:1px solid #cfdbe8"></div>
<div class="t" style="left:1px;top:6.5px;font-size:11px;color:#3a5f88">1</div>
<div class="t" style="left:193px;top:6.5px;font-size:11px;color:#222">1</div>
<div class="t" style="left:279px;top:6.5px;font-size:11px;color:#222">1</div>
<div class="t" style="left:365px;top:6.5px;font-size:11px;color:#222">1</div>
<div class="t" style="left:451px;top:6.5px;font-size:11px;color:#222">1</div>
<div class="t" style="left:537px;top:6.5px;font-size:11px;color:#222">7</div>
<div class="t" style="left:673px;top:6.5px;font-size:11px;color:#222">1</div>
<div class="ab" style="left:46px;top:23.5px;width:730px;height:23px;background:#f7f7f7;border-bottom:1px solid #c9c9c9"></div>
<div class="ab" style="left:0;top:23.5px;width:46px;height:23px;background:linear-gradient(90deg,#dceaf8,#e9f2fb);border-bottom:1px solid #cfdbe8"></div>
<div class="t" style="left:1px;top:29.5px;font-size:11px;color:#3a5f88">2</div>
<div class="t" style="left:193px;top:29.5px;font-size:11px;color:#222">2</div>
<div class="t" style="left:279px;top:29.5px;font-size:11px;color:#222">2</div>
<div class="t" style="left:365px;top:29.5px;font-size:11px;color:#222">2</div>
<div class="t" style="left:451px;top:29.5px;font-size:11px;color:#222">2</div>
<div class="t" style="left:537px;top:29.5px;font-size:11px;color:#222">7</div>
<div class="t" style="left:673px;top:29.5px;font-size:11px;color:#222">1</div>
<div class="ab" style="left:46px;top:46.5px;width:730px;height:23px;background:#ffffff;border-bottom:1px solid #c9c9c9"></div>
<div class="ab" style="left:0;top:46.5px;width:46px;height:23px;background:linear-gradient(90deg,#dceaf8,#e9f2fb);border-bottom:1px solid #cfdbe8"></div>
<div class="t" style="left:1px;top:52.5px;font-size:11px;color:#3a5f88">3</div>
<div class="t" style="left:193px;top:52.5px;font-size:11px;color:#222">3</div>
<div class="t" style="left:279px;top:52.5px;font-size:11px;color:#222">3</div>
<div class="t" style="left:365px;top:52.5px;font-size:11px;color:#222">3</div>
<div class="t" style="left:451px;top:52.5px;font-size:11px;color:#222">3</div>
<div class="t" style="left:537px;top:52.5px;font-size:11px;color:#222">7</div>
<div class="t" style="left:673px;top:52.5px;font-size:11px;color:#222">1</div>
<div class="ab" style="left:46px;top:69.5px;width:730px;height:23px;background:#f7f7f7;border-bottom:1px solid #c9c9c9"></div>
<div class="ab" style="left:0;top:69.5px;width:46px;height:23px;background:linear-gradient(90deg,#dceaf8,#e9f2fb);border-bottom:1px solid #cfdbe8"></div>
<div class="t" style="left:1px;top:75.5px;font-size:11px;color:#3a5f88">4</div>
<div class="t" style="left:193px;top:75.5px;font-size:11px;color:#222">4</div>
<div class="t" style="left:279px;top:75.5px;font-size:11px;color:#222">4</div>
<div class="t" style="left:365px;top:75.5px;font-size:11px;color:#222">4</div>
<div class="t" style="left:451px;top:75.5px;font-size:11px;color:#222">4</div>
<div class="t" style="left:537px;top:75.5px;font-size:11px;color:#222">7</div>
<div class="t" style="left:673px;top:75.5px;font-size:11px;color:#222">1</div>
<div class="ab" style="left:46px;top:92.5px;width:730px;height:23px;background:#ffffff;border-bottom:1px solid #c9c9c9"></div>
<div class="ab" style="left:0;top:92.5px;width:46px;height:23px;background:linear-gradient(90deg,#dceaf8,#e9f2fb);border-bottom:1px solid #cfdbe8"></div>
<div class="t" style="left:1px;top:98.5px;font-size:11px;color:#3a5f88">5</div>
<div class="t" style="left:193px;top:98.5px;font-size:11px;color:#222">5</div>
<div class="t" style="left:279px;top:98.5px;font-size:11px;color:#222">5</div>
<div class="t" style="left:365px;top:98.5px;font-size:11px;color:#222">5</div>
<div class="t" style="left:451px;top:98.5px;font-size:11px;color:#222">5</div>
<div class="t" style="left:537px;top:98.5px;font-size:11px;color:#222">7</div>
<div class="t" style="left:673px;top:98.5px;font-size:11px;color:#222">1</div>
<div class="ab" style="left:46px;top:115.5px;width:730px;height:23px;background:#f7f7f7;border-bottom:1px solid #c9c9c9"></div>
<div class="ab" style="left:0;top:115.5px;width:46px;height:23px;background:linear-gradient(90deg,#dceaf8,#e9f2fb);border-bottom:1px solid #cfdbe8"></div>
<div class="t" style="left:1px;top:121.5px;font-size:11px;color:#3a5f88">6</div>
<div class="t" style="left:193px;top:121.5px;font-size:11px;color:#222">6</div>
<div class="t" style="left:279px;top:121.5px;font-size:11px;color:#222">6</div>
<div class="t" style="left:365px;top:121.5px;font-size:11px;color:#222">6</div>
<div class="t" style="left:451px;top:121.5px;font-size:11px;color:#222">6</div>
<div class="t" style="left:537px;top:121.5px;font-size:11px;color:#222">7</div>
<div class="t" style="left:673px;top:121.5px;font-size:11px;color:#222">1</div>
<div class="ab" style="left:46px;top:138.5px;width:730px;height:23px;background:#ffffff;border-bottom:1px solid #c9c9c9"></div>
<div class="ab" style="left:0;top:138.5px;width:46px;height:23px;background:linear-gradient(90deg,#dceaf8,#e9f2fb);border-bottom:1px solid #cfdbe8"></div>
<div class="ab" style="left:192px;top:138.5px;width:584px;height:23px;background:#a9d2e6"></div>
<div class="ab" style="left:46px;top:138.5px;width:146px;height:23px;background:#f3f0da;border:1px solid #5a5a5a"></div>
<div class="t" style="left:1px;top:144.5px;font-size:11px;color:#3a5f88">7</div>
<div class="t" style="left:193px;top:144.5px;font-size:11px;color:#222">7</div>
<div class="t" style="left:279px;top:144.5px;font-size:11px;color:#222">7</div>
<div class="t" style="left:365px;top:144.5px;font-size:11px;color:#222">7</div>
<div class="t" style="left:451px;top:144.5px;font-size:11px;color:#222">7</div>
<div class="t" style="left:537px;top:144.5px;font-size:11px;color:#222">7</div>
<div class="t" style="left:673px;top:144.5px;font-size:11px;color:#222">1</div>
<div class="ab" style="left:46px;top:161.5px;width:730px;height:23px;background:#f7f7f7;border-bottom:1px solid #c9c9c9"></div>
<div class="ab" style="left:0;top:161.5px;width:46px;height:23px;background:linear-gradient(90deg,#dceaf8,#e9f2fb);border-bottom:1px solid #cfdbe8"></div>
<div class="t" style="left:1px;top:167.5px;font-size:11px;color:#3a5f88">8</div>
<div class="t" style="left:193px;top:167.5px;font-size:11px;color:#222">1</div>
<div class="t" style="left:279px;top:167.5px;font-size:11px;color:#222">1</div>
<div class="t" style="left:365px;top:167.5px;font-size:11px;color:#222">1</div>
<div class="t" style="left:451px;top:167.5px;font-size:11px;color:#222">1</div>
<div class="t" style="left:537px;top:167.5px;font-size:11px;color:#222">7</div>
<div class="t" style="left:673px;top:167.5px;font-size:11px;color:#222">1</div>
<div class="ab" style="left:46px;top:184.5px;width:730px;height:23px;background:#ffffff;border-bottom:1px solid #c9c9c9"></div>
<div class="ab" style="left:0;top:184.5px;width:46px;height:23px;background:linear-gradient(90deg,#dceaf8,#e9f2fb);border-bottom:1px solid #cfdbe8"></div>
<div class="t" style="left:1px;top:190.5px;font-size:11px;color:#3a5f88">9</div>
<div class="t" style="left:193px;top:190.5px;font-size:11px;color:#222">1</div>
<div class="t" style="left:279px;top:190.5px;font-size:11px;color:#222">1</div>
<div class="t" style="left:365px;top:190.5px;font-size:11px;color:#222">1</div>
<div class="t" style="left:451px;top:190.5px;font-size:11px;color:#222">1</div>
<div class="t" style="left:537px;top:190.5px;font-size:11px;color:#222">7</div>
<div class="t" style="left:673px;top:190.5px;font-size:11px;color:#222">1</div>
<div class="ab" style="left:46px;top:207.5px;width:730px;height:23px;background:#f7f7f7;border-bottom:1px solid #c9c9c9"></div>
<div class="ab" style="left:0;top:207.5px;width:46px;height:23px;background:linear-gradient(90deg,#dceaf8,#e9f2fb);border-bottom:1px solid #cfdbe8"></div>
<div class="t" style="left:1px;top:213.5px;font-size:11px;color:#3a5f88">10</div>
<div class="t" style="left:193px;top:213.5px;font-size:11px;color:#222">1</div>
<div class="t" style="left:279px;top:213.5px;font-size:11px;color:#222">1</div>
<div class="t" style="left:365px;top:213.5px;font-size:11px;color:#222">1</div>
<div class="t" style="left:451px;top:213.5px;font-size:11px;color:#222">1</div>
<div class="t" style="left:537px;top:213.5px;font-size:11px;color:#222">7</div>
<div class="t" style="left:673px;top:213.5px;font-size:11px;color:#222">1</div>
<div class="ab" style="left:46px;top:230.5px;width:730px;height:23px;background:#ffffff;border-bottom:1px solid #c9c9c9"></div>
<div class="ab" style="left:0;top:230.5px;width:46px;height:23px;background:linear-gradient(90deg,#dceaf8,#e9f2fb);border-bottom:1px solid #cfdbe8"></div>
<div class="t" style="left:1px;top:236.5px;font-size:11px;color:#3a5f88">11</div>
<div class="t" style="left:193px;top:236.5px;font-size:11px;color:#222">1</div>
<div class="t" style="left:279px;top:236.5px;font-size:11px;color:#222">1</div>
<div class="t" style="left:365px;top:236.5px;font-size:11px;color:#222">1</div>
<div class="t" style="left:451px;top:236.5px;font-size:11px;color:#222">1</div>
<div class="t" style="left:537px;top:236.5px;font-size:11px;color:#222">7</div>
<div class="t" style="left:673px;top:236.5px;font-size:11px;color:#222">1</div>
<div class="ab" style="left:46px;top:253.5px;width:730px;height:23px;background:#f7f7f7;border-bottom:1px solid #c9c9c9"></div>
<div class="ab" style="left:0;top:253.5px;width:46px;height:23px;background:linear-gradient(90deg,#dceaf8,#e9f2fb);border-bottom:1px solid #cfdbe8"></div>
<div class="t" style="left:1px;top:259.5px;font-size:11px;color:#3a5f88">12</div>
<div class="t" style="left:193px;top:259.5px;font-size:11px;color:#222">1</div>
<div class="t" style="left:279px;top:259.5px;font-size:11px;color:#222">1</div>
<div class="t" style="left:365px;top:259.5px;font-size:11px;color:#222">1</div>
<div class="t" style="left:451px;top:259.5px;font-size:11px;color:#222">1</div>
<div class="t" style="left:537px;top:259.5px;font-size:11px;color:#222">7</div>
<div class="t" style="left:673px;top:259.5px;font-size:11px;color:#222">1</div>
<div class="ab" style="left:46px;top:276.5px;width:730px;height:23px;background:#ffffff;border-bottom:1px solid #c9c9c9"></div>
<div class="ab" style="left:0;top:276.5px;width:46px;height:23px;background:linear-gradient(90deg,#dceaf8,#e9f2fb);border-bottom:1px solid #cfdbe8"></div>
<div class="t" style="left:1px;top:282.5px;font-size:11px;color:#3a5f88">13</div>
<div class="t" style="left:193px;top:282.5px;font-size:11px;color:#222">1</div>
<div class="t" style="left:279px;top:282.5px;font-size:11px;color:#222">1</div>
<div class="t" style="left:365px;top:282.5px;font-size:11px;color:#222">1</div>
<div class="t" style="left:451px;top:282.5px;font-size:11px;color:#222">1</div>
<div class="t" style="left:537px;top:282.5px;font-size:11px;color:#222">7</div>
<div class="t" style="left:673px;top:282.5px;font-size:11px;color:#222">1</div>
<div class="ab" style="left:46px;top:299.5px;width:730px;height:23px;background:#f7f7f7;border-bottom:1px solid #c9c9c9"></div>
<div class="ab" style="left:0;top:299.5px;width:46px;height:23px;background:linear-gradient(90deg,#dceaf8,#e9f2fb);border-bottom:1px solid #cfdbe8"></div>
<div class="t" style="left:1px;top:305.5px;font-size:11px;color:#3a5f88">14</div>
<div class="t" style="left:193px;top:305.5px;font-size:11px;color:#222">1</div>
<div class="t" style="left:279px;top:305.5px;font-size:11px;color:#222">1</div>
<div class="t" style="left:365px;top:305.5px;font-size:11px;color:#222">1</div>
<div class="t" style="left:451px;top:305.5px;font-size:11px;color:#222">1</div>
<div class="t" style="left:537px;top:305.5px;font-size:11px;color:#222">7</div>
<div class="t" style="left:673px;top:305.5px;font-size:11px;color:#222">1</div>
<div class="ab" style="left:46px;top:322.5px;width:730px;height:23px;background:#ffffff;border-bottom:1px solid #c9c9c9"></div>
<div class="ab" style="left:0;top:322.5px;width:46px;height:23px;background:linear-gradient(90deg,#dceaf8,#e9f2fb);border-bottom:1px solid #cfdbe8"></div>
<div class="t" style="left:1px;top:328.5px;font-size:11px;color:#3a5f88">15</div>
<div class="t" style="left:193px;top:328.5px;font-size:11px;color:#222">1</div>
<div class="t" style="left:279px;top:328.5px;font-size:11px;color:#222">1</div>
<div class="t" style="left:365px;top:328.5px;font-size:11px;color:#222">1</div>
<div class="t" style="left:451px;top:328.5px;font-size:11px;color:#222">1</div>
<div class="t" style="left:537px;top:328.5px;font-size:11px;color:#222">7</div>
<div class="t" style="left:673px;top:328.5px;font-size:11px;color:#222">1</div>
<div class="ab" style="left:46px;top:0;width:0;height:338px;border-left:1px dotted #c4c4c4"></div>
<div class="ab" style="left:192px;top:0;width:0;height:338px;border-left:1px dotted #c4c4c4"></div>
<div class="ab" style="left:278px;top:0;width:0;height:338px;border-left:1px dotted #c4c4c4"></div>
<div class="ab" style="left:364px;top:0;width:0;height:338px;border-left:1px dotted #c4c4c4"></div>
<div class="ab" style="left:450px;top:0;width:0;height:338px;border-left:1px dotted #c4c4c4"></div>
<div class="ab" style="left:536px;top:0;width:0;height:338px;border-left:1px dotted #c4c4c4"></div>
<div class="ab" style="left:672px;top:0;width:0;height:338px;border-left:1px dotted #c4c4c4"></div>
</div>
<div class="ab" style="left:1097px;top:307px;width:16px;height:338px;background:#f1f1f1"></div>
<div class="ab" style="left:1099px;top:326px;width:13px;height:222px;background:#c1c1c1"></div>
<svg class="ab" style="left:1101px;top:313px" width="9" height="6" viewBox="0 0 9 6"><path d="M0 6L4.5 1 9 6z" fill="#a3a3a3"/></svg>
<svg class="ab" style="left:1101px;top:634px" width="9" height="6" viewBox="0 0 9 6"><path d="M0 0L4.5 5 9 0z" fill="#505050"/></svg>
<div class="ab" style="left:321px;top:645px;width:792px;height:17px;background:linear-gradient(#fff 15px,#e4f2fe 15px)"></div>
<div class="ab" style="left:513px;top:645px;width:584px;height:16px;background:#f1f1f1"></div>
<div class="ab" style="left:530px;top:647px;width:521px;height:13px;background:#c1c1c1"></div>
<svg class="ab" style="left:517px;top:649px" width="6" height="9" viewBox="0 0 6 9"><path d="M6 0L1 4.5 6 9z" fill="#a3a3a3"/></svg>
<svg class="ab" style="left:1087px;top:649px" width="6" height="9" viewBox="0 0 6 9"><path d="M0 0L5 4.5 0 9z" fill="#505050"/></svg>
<div class="ab" style="left:1097px;top:645px;width:16px;height:16px;background:#dcdcdc"></div>
<div class="ab" style="left:320px;top:662.5px;width:794px;height:27px;border-radius:0 0 6px 6px;background:linear-gradient(#2a74b0 0px,#2a88cc 2px,#2b80d0 35%,#1f70c0 60%,#155fa8 92%,#1a4f88 100%)"></div>
<svg class="ab" style="left:323px;top:669px" width="12" height="14" viewBox="0 0 12 14"><path d="M2 8.5A4.2 4.2 0 0 1 7.5 3" fill="none" stroke="#cfe6fb" stroke-width="1.3"/><path d="M10 5.5A4.2 4.2 0 0 1 4.5 11" fill="none" stroke="#cfe6fb" stroke-width="1.3"/><path d="M6.5 0.8l3 2.2-3 2.2z" fill="#cfe6fb"/><path d="M5.5 8.8l-3 2.2 3 2.2z" fill="#cfe6fb"/></svg>
<svg class="ab" style="left:337px;top:668px" width="16" height="16" viewBox="0 0 16 16"><rect x="0.5" y="0.5" width="10" height="11" fill="#e6f0fa" stroke="#fff"/><rect x="4" y="3.5" width="11" height="12" fill="#f4f8fc" stroke="#ffffff"/><path d="M6 7h7M6 9.5h7M6 12h7" stroke="#7890a8" stroke-width="1"/></svg>
<svg class="ab" style="left:588px;top:672px" width="26" height="8" viewBox="0 0 26 8"><path d="M1 0.5v7" stroke="#6e9fd6" stroke-width="1.2"/><path d="M9 0.5L3 4 9 7.5z" fill="#6e9fd6"/><path d="M21 0.5L16 4 21 7.5zM26 0.5L21 4 26 7.5z" fill="#6e9fd6"/></svg>
<div class="t" style="left:617px;top:670px;font-size:11px;font-weight:bold;color:#fff">Page</div>
<div class="ab" style="left:647px;top:668px;width:34px;height:16px;background:#fff;border:1px solid #9ab"></div>
<div class="t" style="left:650px;top:671px;font-size:11px;color:#111">1</div>
<div class="t" style="left:685px;top:670px;font-size:11px;font-weight:bold;color:#fff">of 4</div>
<svg class="ab" style="left:708px;top:672px" width="27" height="8" viewBox="0 0 27 8"><path d="M0 0.5L5 4 0 7.5zM5 0.5L10 4 5 7.5z" fill="#d6e8fa"/><path d="M17 0.5L23 4 17 7.5z" fill="#d6e8fa"/><path d="M25 0.5v7" stroke="#d6e8fa" stroke-width="1.4"/></svg>
<div class="ab" style="left:737px;top:668px;width:42px;height:16px;background:#fff;border:1px solid #9ab;border-radius:2px"></div>
<div class="t" style="left:741px;top:671px;font-size:11px;color:#111">20</div>
<svg class="ab" style="left:765px;top:673px" width="10" height="7" viewBox="0 0 10 7"><path d="M1 1l4 4 4-4" fill="none" stroke="#111" stroke-width="1.8"/></svg>
<div class="t" style="left:900px;top:670px;width:209px;text-align:right;font-size:11px;font-weight:bold;color:#fff">View 1-20 of 64</div>
<div class="ab" style="left:849px;top:710.5px;width:88px;height:20px;border:1px solid #dedede;border-right-color:#7a7a7a;border-radius:6px;background:linear-gradient(#f2f2f2,#e6e6e6)"></div>
<div class="t" style="left:849px;top:713px;width:88px;text-align:center;font-size:11px;color:#222">OK</div>
<div class="ab" style="left:945px;top:710.5px;width:88px;height:20px;border:1px solid #dedede;border-right-color:#7a7a7a;border-radius:6px;background:linear-gradient(#f2f2f2,#e6e6e6)"></div>
<div class="t" style="left:945px;top:713px;width:88px;text-align:center;font-size:11px;color:#222">Cancel</div>
<div class="ab" style="left:1041px;top:710.5px;width:89px;height:20px;border:1px solid #dedede;border-right-color:#7a7a7a;border-radius:6px;background:linear-gradient(#f2f2f2,#e6e6e6)"></div>
<div class="t" style="left:1041px;top:713px;width:89px;text-align:center;font-size:11px;color:#222">Apply</div>
</div></div>
<svg class="ab" style="left:546px;top:460px" width="13" height="22" viewBox="0 0 13 22"><path d="M1 1v16l4-4 3 7 2.5-1-3-6.5h5.5z" fill="#fff" stroke="#111" stroke-width="1"/></svg>
<div class="t" style="left:197px;top:670px;font-size:32px;font-weight:bold;color:rgba(255,255,255,0.3)">://pbxshop.co</div>
<svg class="ab" style="left:0;top:0" width="200" height="140" viewBox="0 0 200 140">
<defs>
<linearGradient id="g1" x1="0" y1="0" x2="0" y2="1"><stop offset="0" stop-color="#c4c4c4"/><stop offset=".45" stop-color="#9c9c9c"/><stop offset="1" stop-color="#686868"/></linearGradient>
<linearGradient id="g1t" x1="0" y1="0" x2="1" y2="0"><stop offset="0" stop-color="#c8c8c8"/><stop offset=".3" stop-color="#d4d4d4"/><stop offset=".6" stop-color="#8a8a8a"/><stop offset="1" stop-color="#9c9c9c"/></linearGradient>
<linearGradient id="g1r" x1="0" y1="0" x2="1" y2="0"><stop offset="0" stop-color="#5e5e5e"/><stop offset="1" stop-color="#f4f4f4"/></linearGradient>
<linearGradient id="g2" x1="0" y1="0" x2="0" y2="1"><stop offset="0" stop-color="#a8001a"/><stop offset=".6" stop-color="#d20022"/><stop offset="1" stop-color="#c8001f"/></linearGradient>
<linearGradient id="g3" x1="0" y1="0" x2="0.6" y2="1"><stop offset="0" stop-color="#f6f6f6"/><stop offset=".4" stop-color="#b4b4b4"/><stop offset=".75" stop-color="#8c8c8c"/><stop offset="1" stop-color="#6a6a6a"/></linearGradient>
<linearGradient id="g4" x1="0" y1="0" x2="1" y2="0"><stop offset="0" stop-color="#555"/><stop offset=".6" stop-color="#7a7a7a"/><stop offset="1" stop-color="#a8a8a8"/></linearGradient>
</defs>
<path d="M32,121 V92 C32,68 52,54 76,54 L84,53 V70 L72,71 C60,72 53,80 53,92 V121 Z" fill="url(#g1)"/>
<path d="M36,74 C42,62 54,55 76,54 L84,53 V70 L72,71 C62,72 56,77 54,84 C48,80 42,77 36,74 Z" fill="url(#g1t)" opacity=".85"/>
<path d="M68,121 V108 C68,102 73,98 80,98 L84,98 C84,106 86,114 89,121 Z" fill="url(#g1r)"/>
<path d="M82,50 H103 V86 C103,95 110,100 117,100 C123,100 127,97 130,93 L141,113 C134,118 125,121 115,121 C95,121 82,108 82,92 Z" fill="url(#g2)"/>
<path d="M104,93 C108,99 112,100 117,100 C123,100 127,97 130,93 L141,113 C130,117 120,117 112,112 Z" fill="#a80018" opacity=".45"/>
<path d="M143,60 C150,53 158,50 168,49 L168,77 C162,77 156,79 152,81 Z" fill="url(#g4)"/>
<path d="M117,53 C125,53 131,54 137,55 C148,64 154,74 156,86 C158,96 162,102 168,106 V121 H150 C146,113 140,106 137,97 C133,85 128,68 117,53 Z" fill="url(#g3)"/>
</svg>
</div></body></html>
